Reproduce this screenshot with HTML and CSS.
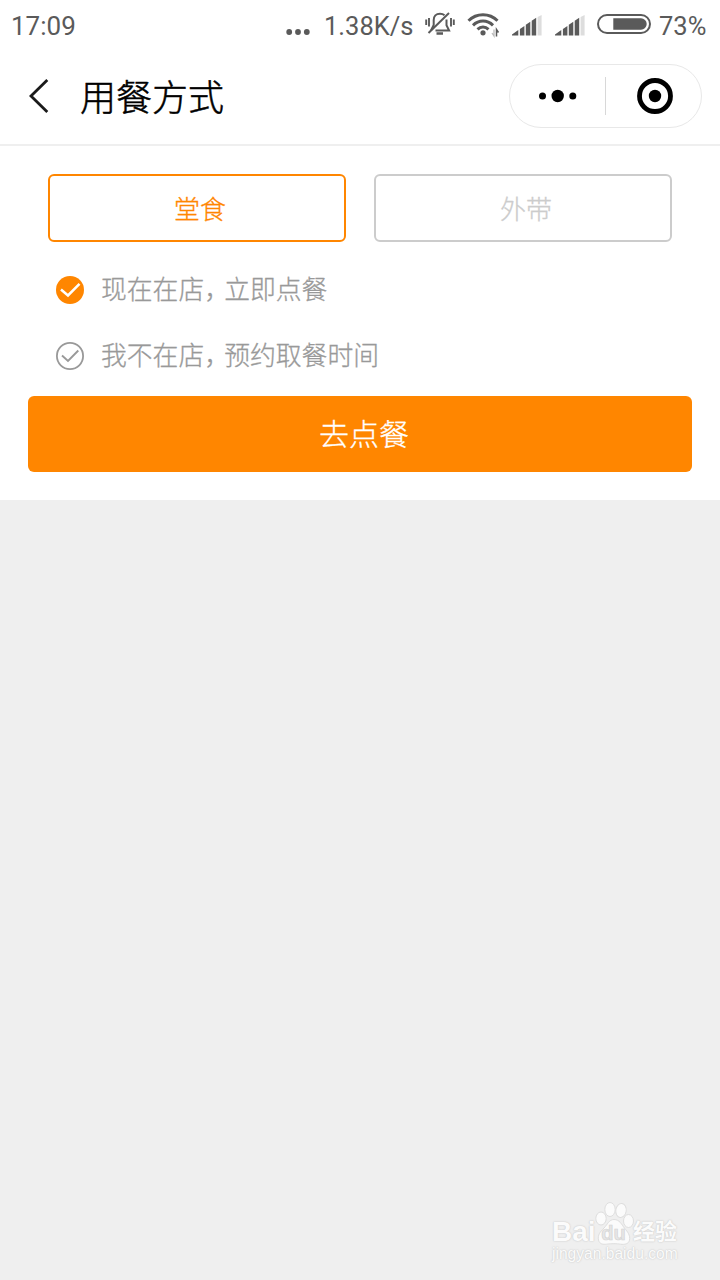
FILE: index.html
```
<!DOCTYPE html>
<html lang="zh-CN">
<head>
    <meta charset="UTF-8">
    <title>用餐方式</title>
    <link rel="stylesheet" href="styles.css">
</head>
<body>
    <div class="status-bar">
        <span class="time">17:09</span>
        <svg class="more" width="24" height="8" viewBox="0 0 24 8" fill="#5a5a5a">
            <circle cx="3.2" cy="4" r="2.9"/>
            <circle cx="12" cy="4" r="2.9"/>
            <circle cx="20.8" cy="4" r="2.9"/>
        </svg>
        <span class="speed">1.38K/s</span>
        <!-- muted bell -->
        <svg class="bell" width="30" height="26" viewBox="0 0 30 26" fill="none" stroke="#5a5a5a" stroke-width="2">
            <path d="M19.500 4.200C18.300 3.100 16.800 2.700 15 2.700c-4 0-6.300 2.800-6.300 6.300v5L6 19.500M21.500 8.500v5.800l2.600 5.200H10.500"/>
            <path d="M3.500 22L24 2"/>
            <path d="M11.500 22.500h6.500" stroke-width="2.500"/>
            <path d="M1.200 8.500v5.500M4 7v8.500M26 7v8.500M28.800 8.500v5.500" stroke-width="1.900"/>
        </svg>
        <svg class="wifi" width="33" height="26" viewBox="0 0 33 26" fill="none" stroke="#5a5a5a" stroke-width="3">
            <path d="M1.500 8.800C9.500 .8 22.500 .8 30.500 8.800"/>
            <path d="M6 13.300c5.800-5.600 14.200-5.600 20 0"/>
            <path d="M10.500 17.300c3.200-3 7.800-3 11 0"/>
            <circle cx="16" cy="20.800" r="2.600" fill="#5a5a5a" stroke="none"/>
            <path d="M27 17.500v6.500l-2-3" stroke="#bbb" stroke-width="1.300"/>
            <path d="M29.500 24.500v-7l2 3" stroke-width="1.500"/>
        </svg>
        <svg class="signal" width="30" height="21" viewBox="0 0 30 21" fill="#5a5a5a">
            <path d="M0 20.500v-1l6.300-4.500v5.500zM7.900 14l4.500-3v9.500H7.900zM13.800 9.800l4.500-3v13.700h-4.500zM19.700 5.800l4.500-3v17.700h-4.500z"/>
            <path d="M25.600 2l4-2v20.500h-4z" fill="#ddd"/>
        </svg>
        <svg class="signal second" width="30" height="21" viewBox="0 0 30 21" fill="#5a5a5a">
            <path d="M0 20.500v-1l6.300-4.500v5.500zM7.900 14l4.500-3v9.500H7.900zM13.800 9.800l4.500-3v13.700h-4.500zM19.700 5.800l4.500-3v17.700h-4.500z"/>
            <path d="M25.600 2l4-2v20.500h-4z" fill="#ddd"/>
        </svg>
        <svg class="battery" width="54" height="20" viewBox="0 0 54 20">
            <rect x="1" y="1" width="52" height="18" rx="9" fill="none" stroke="#5a5a5a" stroke-width="2"/>
            <path d="M16.300 4.300H44a5.700 5.700 0 0 1 0 11.400H16.300z" fill="#5a5a5a"/>
        </svg>
        <span class="percent">73%</span>
    </div>

    <div class="nav-bar">
        <svg class="back" width="20" height="36" viewBox="0 0 20 36" fill="none" stroke="#1a1a1a" stroke-width="2.800">
            <path d="M18.300 2L2 18l16.300 16"/>
        </svg>
        <h1>用餐方式</h1>
        <div class="capsule">
            <svg class="dots" width="38" height="14" viewBox="0 0 38 14">
                <circle cx="3.500" cy="7" r="3.500"/>
                <circle cx="18.700" cy="7" r="6.200"/>
                <circle cx="33.800" cy="7" r="3.500"/>
            </svg>
            <span class="divider"></span>
            <svg class="close" width="36" height="36" viewBox="0 0 36 36">
                <circle cx="18" cy="18" r="15.500" fill="none" stroke="#000" stroke-width="4.800"/>
                <circle cx="18" cy="18" r="6.200"/>
            </svg>
        </div>
    </div>

    <div class="panel">
        <div class="tabs">
            <div class="tab active">堂食</div>
            <div class="tab">外带</div>
        </div>
        <div class="option">
            <svg width="28" height="28" viewBox="0 0 28 28" fill="none">
                <circle cx="14" cy="14" r="14" fill="#ff8600"/>
                <path d="M5 13.500l7 6L23.500 7.800" stroke="#fff" stroke-width="2.500"/>
            </svg>
            <span class="label">现在在店<span class="comma">，</span>立即点餐</span>
        </div>
        <div class="option">
            <svg width="28" height="28" viewBox="0 0 28 28" fill="none" stroke="#999">
                <circle cx="14" cy="14" r="13.100" stroke-width="1.800"/>
                <path d="M6 13.500l6 5.500L22.300 8.500" stroke-width="1.900"/>
            </svg>
            <span class="label">我不在店<span class="comma">，</span>预约取餐时间</span>
        </div>
        <button class="submit">去点餐</button>
    </div>

    <div class="watermark">
        <div class="brand">
            <span class="bai">Bai</span>
            <svg class="paw" width="42" height="44" viewBox="0 0 42 44" fill="#fbfbfb" stroke="#dedede">
                <ellipse cx="7" cy="16.500" rx="5.200" ry="6.500"/>
                <ellipse cx="16" cy="7.500" rx="5.200" ry="7"/>
                <ellipse cx="27" cy="8.500" rx="5.200" ry="7" transform="rotate(8 27 8.500)"/>
                <ellipse cx="34.500" cy="19" rx="5" ry="6.500"/>
                <path d="M20 17.500c-5 0-6.500 5-10 8.500C6 30 3.500 33 4.500 38c1 4.500 5 4.500 8 4.200 5-.7 10-.7 14 0 4 .5 8 0 9-4 1-5-2-8.500-5-12-3-4-5-8.700-10.500-8.700z"/>
                <text x="19.500" y="38" class="du">du</text>
            </svg>
            <span class="jingyan">经验</span>
        </div>
        <div class="site">jingyan.baidu.com</div>
    </div>
</body>
</html>
```
FILE: styles.css
```
* {
    box-sizing: border-box;
}

body {
    margin: 0;
    height: 1280px;
    overflow: hidden;
    background: #efefef;
    font-family: "Noto Sans CJK SC", "Noto Sans", sans-serif;
    font-weight: 300;
}

svg {
    display: block;
    flex: none;
}

.status-bar {
    display: flex;
    align-items: center;
    height: 50px;
    padding: 1px 11px 0 11px;
    background: #fff;
    color: #5a5a5a;
    font-family: Roboto, sans-serif;
    font-size: 26px;
    font-weight: 400;
    white-space: nowrap;
}

.time {
    width: 275px;
}

.more {
    margin-top: 12px;
}

.speed {
    width: 101px;
    padding-left: 14px;
    font-size: 25.5px;
}

.bell {
    margin: -4px 0 0 14px;
}

.wifi {
    margin-left: 12px;
    margin-top: -2px;
}

.signal {
    margin: -1px 0 0 12px;
}

.signal.second {
    margin-left: 13px;
}

.battery {
    margin: -3px 0 0 12px;
}

.percent {
    margin-left: 8px;
    font-size: 25.5px;
}

.nav-bar {
    display: flex;
    align-items: center;
    height: 96px;
    padding: 0 18px 2px 29px;
    background: #fff;
    border-bottom: 2px solid #efefef;
}

h1 {
    margin: -2px auto 0 31px;
    color: #000;
    font-size: 36px;
    font-weight: 300;
    line-height: 50px;
    -webkit-text-stroke: 0.5px;
}

.capsule {
    display: flex;
    align-items: center;
    width: 193px;
    height: 64px;
    padding-left: 29px;
    border: 1px solid #e8e8e8;
    border-radius: 32px;
}

.divider {
    width: 1px;
    height: 38px;
    margin: 0 31px 0 28px;
    background: #d8d8d8;
}

.panel {
    height: 354px;
    padding: 28px 28px 0;
    background: #fff;
}

.tabs {
    display: flex;
    gap: 28px;
    padding: 0 20px;
    margin-bottom: 15px;
}

.tab {
    flex: 1;
    height: 68px;
    padding-left: 6px;
    border: 2px solid #ccc;
    border-radius: 6px;
    color: #ccc;
    font-size: 26px;
    line-height: 63px;
    text-align: center;
    -webkit-text-stroke: 0.3px;
}

.tab.active {
    border-color: #ff8600;
    color: #ff8600;
}

.option {
    display: flex;
    align-items: center;
    gap: 17px;
    height: 66px;
    padding-left: 28px;
    color: #999;
    font-size: 25.8px;
}

.label {
    padding-bottom: 5px;
    -webkit-text-stroke: 0.3px;
}

.comma {
    letter-spacing: -5.8px;
}

.submit {
    display: block;
    width: 100%;
    height: 76px;
    margin-top: 7px;
    padding: 0 0 5px 8px;
    border: none;
    border-radius: 6px;
    background: #ff8600;
    color: #fff;
    font: inherit;
    font-size: 30px;
    -webkit-text-stroke: 0.3px;
}

.watermark {
    position: absolute;
    left: 552px;
    top: 1202px;
    color: #fbfbfb;
    font-family: "Liberation Sans", "Noto Sans CJK SC", sans-serif;
    text-shadow: 0 0 1px #ccc, 0 0 2px #ccc;
}

.brand {
    display: flex;
    align-items: flex-end;
    height: 44px;
}

.bai {
    width: 42px;
    padding-bottom: 0;
    font-size: 28px;
    font-weight: 700;
    line-height: 28px;
}

.du {
    fill: #e6e6e6;
    stroke: #d2d2d2;
    stroke-width: 0.6px;
    font-size: 20px;
    font-weight: 700;
    text-anchor: middle;
    text-shadow: none;
}

.jingyan {
    margin-left: -3px;
    font-size: 22px;
    font-weight: 700;
    line-height: 28px;
}

.site {
    font-size: 15.6px;
    font-weight: 400;
    line-height: 16px;
}
```
